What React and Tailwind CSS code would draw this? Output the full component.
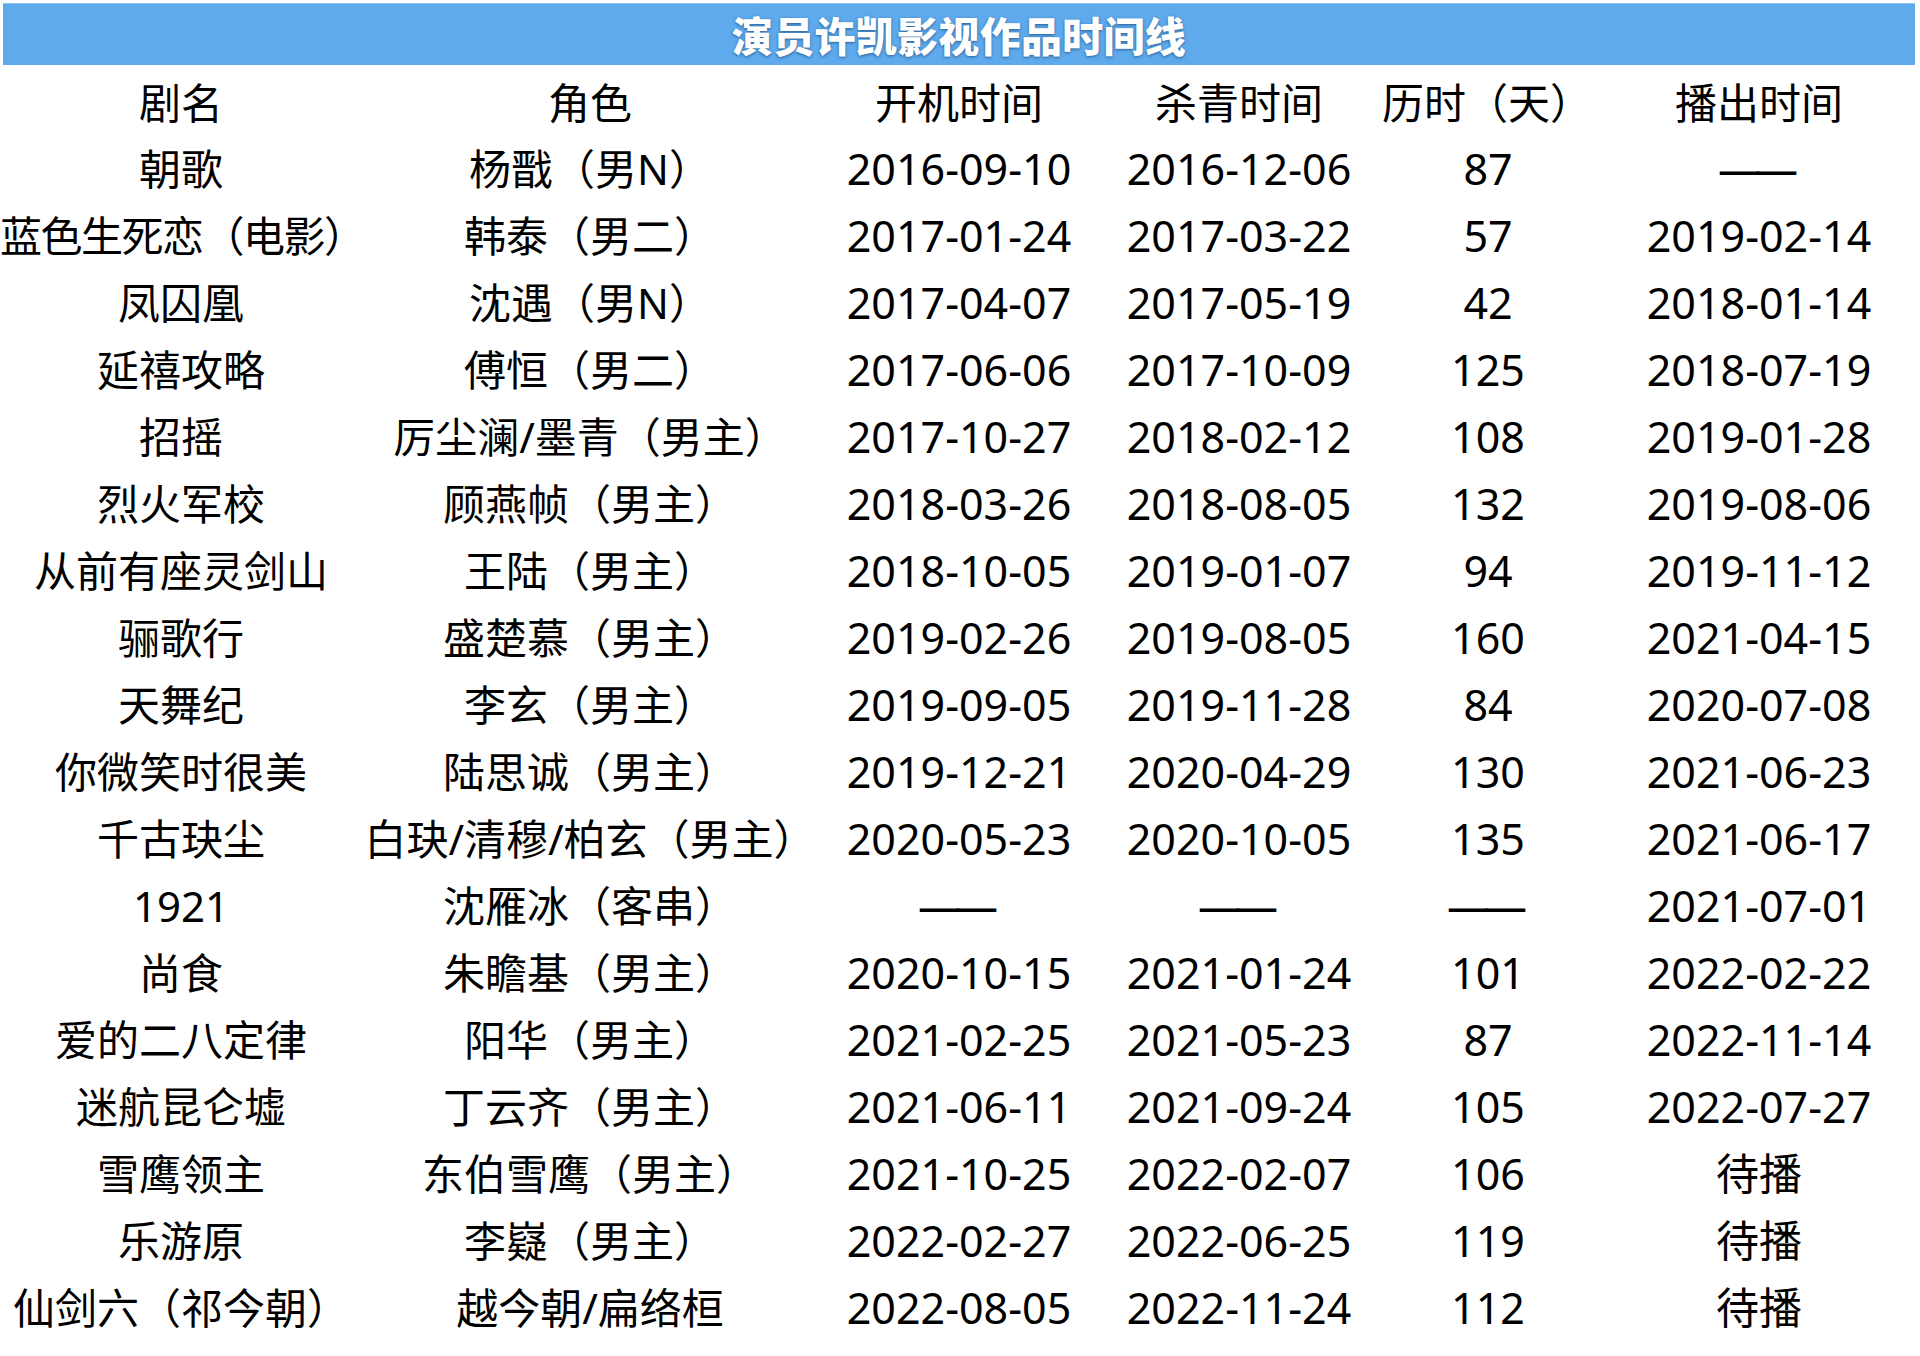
import React from "react";

const rows = [
  ["朝歌", "杨戬（男N）", "2016-09-10", "2016-12-06", "87", "——"],
  ["蓝色生死恋（电影）", "韩泰（男二）", "2017-01-24", "2017-03-22", "57", "2019-02-14"],
  ["凤囚凰", "沈遇（男N）", "2017-04-07", "2017-05-19", "42", "2018-01-14"],
  ["延禧攻略", "傅恒（男二）", "2017-06-06", "2017-10-09", "125", "2018-07-19"],
  ["招摇", "厉尘澜/墨青（男主）", "2017-10-27", "2018-02-12", "108", "2019-01-28"],
  ["烈火军校", "顾燕帧（男主）", "2018-03-26", "2018-08-05", "132", "2019-08-06"],
  ["从前有座灵剑山", "王陆（男主）", "2018-10-05", "2019-01-07", "94", "2019-11-12"],
  ["骊歌行", "盛楚慕（男主）", "2019-02-26", "2019-08-05", "160", "2021-04-15"],
  ["天舞纪", "李玄（男主）", "2019-09-05", "2019-11-28", "84", "2020-07-08"],
  ["你微笑时很美", "陆思诚（男主）", "2019-12-21", "2020-04-29", "130", "2021-06-23"],
  ["千古玦尘", "白玦/清穆/柏玄（男主）", "2020-05-23", "2020-10-05", "135", "2021-06-17"],
  ["1921", "沈雁冰（客串）", "——", "——", "——", "2021-07-01"],
  ["尚食", "朱瞻基（男主）", "2020-10-15", "2021-01-24", "101", "2022-02-22"],
  ["爱的二八定律", "阳华（男主）", "2021-02-25", "2021-05-23", "87", "2022-11-14"],
  ["迷航昆仑墟", "丁云齐（男主）", "2021-06-11", "2021-09-24", "105", "2022-07-27"],
  ["雪鹰领主", "东伯雪鹰（男主）", "2021-10-25", "2022-02-07", "106", "待播"],
  ["乐游原", "李嶷（男主）", "2022-02-27", "2022-06-25", "119", "待播"],
  ["仙剑六（祁今朝）", "越今朝/扁络桓", "2022-08-05", "2022-11-24", "112", "待播"],
];

const headers = ["剧名", "角色", "开机时间", "杀青时间", "历时（天）", "播出时间"];

function Cell({ children, className = "" }) {
  return (
    <div className={`flex items-center justify-center whitespace-nowrap ${className}`}>
      {children}
    </div>
  );
}

export default function App() {
  return (
    <div className="w-[1920px] h-[1356px] bg-white pt-[3px] overflow-hidden font-['Noto_Sans','Noto_Sans_CJK_SC',sans-serif] text-black">
      <div className="ml-[3px] mr-[5px] h-[62px] bg-[#5eaaec] border-t border-[#8cc4f2] flex items-center justify-center">
        <h1 className="font-['Noto_Sans_CJK_SC',sans-serif] font-black text-[41px] leading-none text-white tracking-[0.3px] [text-shadow:0_1px_3px_rgba(20,60,110,0.7)]">
          演员许凯影视作品时间线
        </h1>
      </div>

      <div className="mt-[5px] grid grid-cols-[362px_456px_282px_278px_220px_322px] grid-rows-[65px] auto-rows-[67px] text-[42px] leading-none">
        {headers.map((h, i) => (
          <Cell key={h} className={i === 4 ? "pr-[2px]" : ""}>
            {h}
          </Cell>
        ))}
        {rows.map((r) =>
          r.map((c, j) => {
            let cls = "";
            if (j >= 2) cls = "text-[43px]";
            if (c === "——") cls = "text-[43px] tracking-[-6px] pr-[8px]";
            if (j === 0 && c.length > 8) cls = "justify-start tracking-[-1.5px]";
            return (
              <Cell key={r[0] + j} className={cls}>
                {c}
              </Cell>
            );
          })
        )}
      </div>
    </div>
  );
}
